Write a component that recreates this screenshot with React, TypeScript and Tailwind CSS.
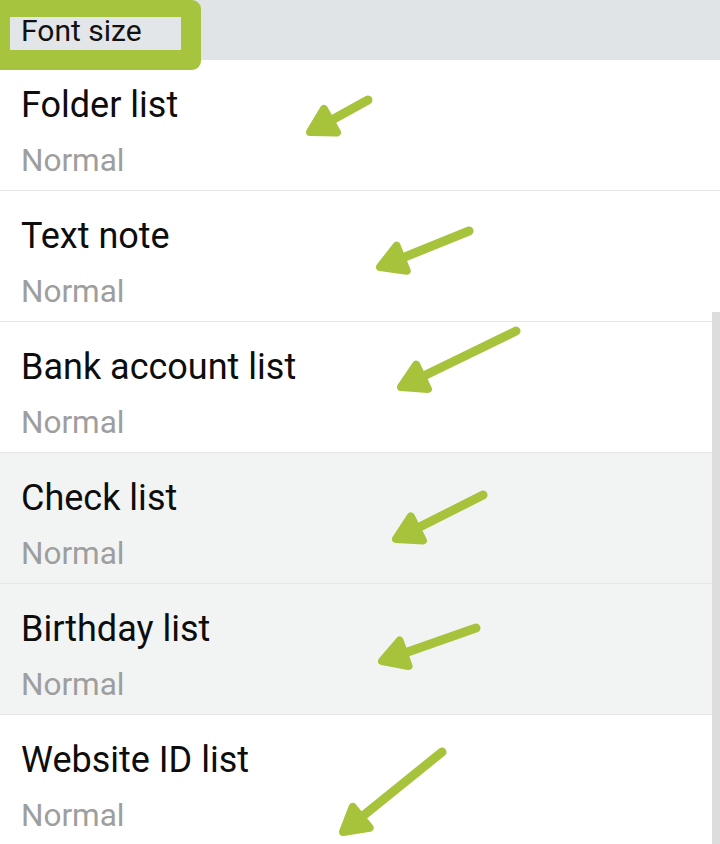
import React from "react";

type Arrow = { t: [number, number]; p: [number, number] };

const arrows: Arrow[] = [
  { t: [368, 100], p: [310, 132] },
  { t: [469, 231], p: [380, 267] },
  { t: [516, 331], p: [401, 387] },
  { t: [483, 495], p: [396, 539] },
  { t: [476, 628], p: [382, 661] },
  { t: [442, 752], p: [343, 832] },
];

function ArrowShape({ t, p }: Arrow) {
  const dx = t[0] - p[0];
  const dy = t[1] - p[1];
  const ang = Math.atan2(dy, dx);
  const L = 27;
  const a = (30 * Math.PI) / 180;
  const w1 = [p[0] + L * Math.cos(ang - a), p[1] + L * Math.sin(ang - a)];
  const w2 = [p[0] + L * Math.cos(ang + a), p[1] + L * Math.sin(ang + a)];
  const sx = p[0] + 12 * Math.cos(ang);
  const sy = p[1] + 12 * Math.sin(ang);
  return (
    <g fill="#a6c33b" stroke="#a6c33b" strokeLinecap="round" strokeLinejoin="round">
      <line x1={t[0]} y1={t[1]} x2={sx} y2={sy} strokeWidth={9} />
      <polygon points={`${p[0]},${p[1]} ${w1[0]},${w1[1]} ${w2[0]},${w2[1]}`} strokeWidth={8} />
    </g>
  );
}

const rows = [
  { title: "Folder list", bg: "bg-white" },
  { title: "Text note", bg: "bg-white" },
  { title: "Bank account list", bg: "bg-white" },
  { title: "Check list", bg: "bg-[#f2f4f4]" },
  { title: "Birthday list", bg: "bg-[#f2f4f4]" },
  { title: "Website ID list", bg: "bg-white" },
];

export default function App() {
  return (
    <div
      className="relative w-[720px] h-[844px] overflow-hidden bg-white"
      style={{ fontFamily: "Roboto, 'Noto Sans', sans-serif" }}
    >
      {/* header with highlight annotation */}
      <div className="relative z-10 flex h-[60px] items-start bg-[#e1e4e7]">
        <div className="h-[70px] w-[201px] shrink-0 rounded-r-[9px] bg-[#a7c43e] pl-[10px] pt-[17px]">
          <div className="h-[33px] w-[171px] bg-[#e3e6e9] pl-[11px]">
            <div className="text-[30px] leading-[28px] text-[#111111]">Font size</div>
          </div>
        </div>
      </div>

      <div className="flex flex-col">
        {rows.map((r, i) => (
          <div
            key={r.title}
            className={`flex flex-col h-[131px] pl-[21px] pt-[25px] ${r.bg} ${
              i < rows.length - 1 ? "border-b border-[#e6e6e6]" : ""
            }`}
          >
            <div className="text-[36px] leading-[40px] text-[#0d0d0d]">{r.title}</div>
            <div className="mt-[18px] text-[31.5px] leading-[36px] text-[#9e9e9e]">Normal</div>
          </div>
        ))}
      </div>

      {/* scrollbar */}
      <div className="absolute right-0 top-[312px] w-[8px] h-[532px] bg-[#dddddd]" />

      <svg className="absolute inset-0 pointer-events-none" width={720} height={844}>
        {arrows.map((a, i) => (
          <ArrowShape key={i} {...a} />
        ))}
      </svg>
    </div>
  );
}
